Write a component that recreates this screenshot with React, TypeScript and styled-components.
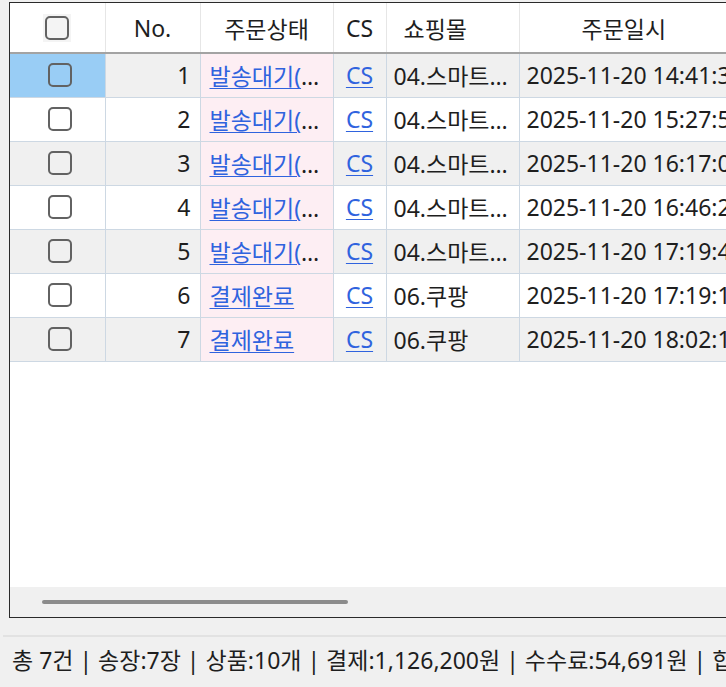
import styled, { createGlobalStyle } from 'styled-components'

const GlobalStyle = createGlobalStyle`
  html, body {
    margin: 0;
    padding: 0;
    background: #f0f0f0;
    overflow: hidden;
  }
  body {
    font-family: 'Noto Sans', 'Noto Sans CJK KR', sans-serif;
    color: #1e1e1e;
  }
`

const Page = styled.div`
  width: 726px;
  height: 687px;
  overflow: hidden;
  padding-top: 2px;
  box-sizing: border-box;
`

const Frame = styled.div`
  margin-left: 9px;
  width: 1000px;
  height: 616px;
  border: 1.5px solid #2a2a2a;
  box-sizing: border-box;
  background: #fff;
  display: flex;
  flex-direction: column;
`

const GridArea = styled.div`
  flex: 1;
  overflow: hidden;
`

const Table = styled.table`
  border-collapse: collapse;
  table-layout: fixed;
  width: 960px;
  font-size: 23px;
`

const HeadCell = styled.th<{ $align?: string; $indent?: number }>`
  height: 49px;
  padding: 0 4px 0 ${({ $indent }) => $indent ?? 4}px;
  font-weight: 400;
  text-align: ${({ $align }) => $align || 'center'};
  border-left: 1px solid #e6e6e6;
  border-bottom: 2px solid #a3a3a3;
  background: #fff;
  white-space: nowrap;
  &:first-child {
    border-left: none;
  }
`

const Row = styled.tr<{ $odd: boolean }>`
  height: 44px;
  background: ${({ $odd }) => ($odd ? '#f0f0f0' : '#ffffff')};
`

const Cell = styled.td<{ $align?: string; $bg?: string; $indent?: number }>`
  padding: 0 ${({ $align }) => ($align === 'right' ? 9 : 3)}px 0 ${({ $indent }) => $indent ?? 9}px;
  border: 1px solid #cdd8e3;
  text-align: ${({ $align }) => $align || 'left'};
  background: ${({ $bg }) => $bg || 'transparent'};
  white-space: nowrap;
  overflow: hidden;
  text-overflow: ellipsis;
  &:first-child {
    border-left: none;
  }
`

const Link = styled.span`
  color: #2f63de;
  text-decoration: underline;
  text-underline-offset: 3px;
  text-decoration-thickness: 1px;
`

const CheckWrap = styled.div<{ $head?: boolean }>`
  display: flex;
  justify-content: center;
  align-items: center;
  width: 28px;
  height: 28px;
  margin: 0 auto;
  background: ${({ $head }) => ($head ? '#f4f4f4' : 'transparent')};
`

const CheckBox = styled.span`
  display: block;
  width: 20px;
  height: 20px;
  border: 2px solid #626262;
  border-radius: 5px;
`

const ScrollTrack = styled.div`
  height: 30px;
  background: #f0f0f0;
  display: flex;
  align-items: center;
  padding-left: 32px;
`

const ScrollThumb = styled.div`
  width: 306px;
  height: 4px;
  border-radius: 2px;
  background: #8c8c8c;
`

const StatusBar = styled.div`
  margin: 17px 0 0 3px;
  border-top: 2px solid #e2e2e2;
  padding: 5px 0 0 9px;
  font-size: 23px;
  white-space: nowrap;
  overflow: hidden;
  color: #1e1e1e;
`

type Order = {
  no: number
  status: string
  mall: string
  date: string
}

const ORDERS: Order[] = [
  { no: 1, status: '발송대기(배송준비)', mall: '04.스마트스토어', date: '2025-11-20 14:41:37' },
  { no: 2, status: '발송대기(배송준비)', mall: '04.스마트스토어', date: '2025-11-20 15:27:52' },
  { no: 3, status: '발송대기(배송준비)', mall: '04.스마트스토어', date: '2025-11-20 16:17:08' },
  { no: 4, status: '발송대기(배송준비)', mall: '04.스마트스토어', date: '2025-11-20 16:46:21' },
  { no: 5, status: '발송대기(배송준비)', mall: '04.스마트스토어', date: '2025-11-20 17:19:44' },
  { no: 6, status: '결제완료', mall: '06.쿠팡', date: '2025-11-20 17:19:15' },
  { no: 7, status: '결제완료', mall: '06.쿠팡', date: '2025-11-20 18:02:11' },
]

export default function App() {
  return (
    <Page>
      <GlobalStyle />
      <Frame>
        <GridArea>
          <Table>
            <colgroup>
              <col style={{ width: 95 }} />
              <col style={{ width: 95 }} />
              <col style={{ width: 133 }} />
              <col style={{ width: 53 }} />
              <col style={{ width: 133 }} />
              <col style={{ width: 451 }} />
            </colgroup>
            <thead>
              <tr>
                <HeadCell>
                  <CheckWrap $head>
                    <CheckBox />
                  </CheckWrap>
                </HeadCell>
                <HeadCell>No.</HeadCell>
                <HeadCell>주문상태</HeadCell>
                <HeadCell>CS</HeadCell>
                <HeadCell $align="left" $indent={17}>쇼핑몰</HeadCell>
                <HeadCell $align="left" $indent={62}>주문일시</HeadCell>
              </tr>
            </thead>
            <tbody>
              {ORDERS.map((o, i) => (
                <Row key={o.no} $odd={i % 2 === 0}>
                  <Cell $bg={i === 0 ? '#99cdf5' : undefined}>
                    <CheckWrap>
                      <CheckBox />
                    </CheckWrap>
                  </Cell>
                  <Cell $align="right">{o.no}</Cell>
                  <Cell $bg="#fdeef3">
                    <Link>{o.status}</Link>
                  </Cell>
                  <Cell $align="center" $indent={3}>
                    <Link>CS</Link>
                  </Cell>
                  <Cell $indent={7}>{o.mall}</Cell>
                  <Cell $indent={7}>{o.date}</Cell>
                </Row>
              ))}
            </tbody>
          </Table>
        </GridArea>
        <ScrollTrack>
          <ScrollThumb />
        </ScrollTrack>
      </Frame>
      <StatusBar>
        총 7건 | 송장:7장 | 상품:10개 | 결제:1,126,200원 | 수수료:54,691원 | 합계:1,071,509원
      </StatusBar>
    </Page>
  )
}
